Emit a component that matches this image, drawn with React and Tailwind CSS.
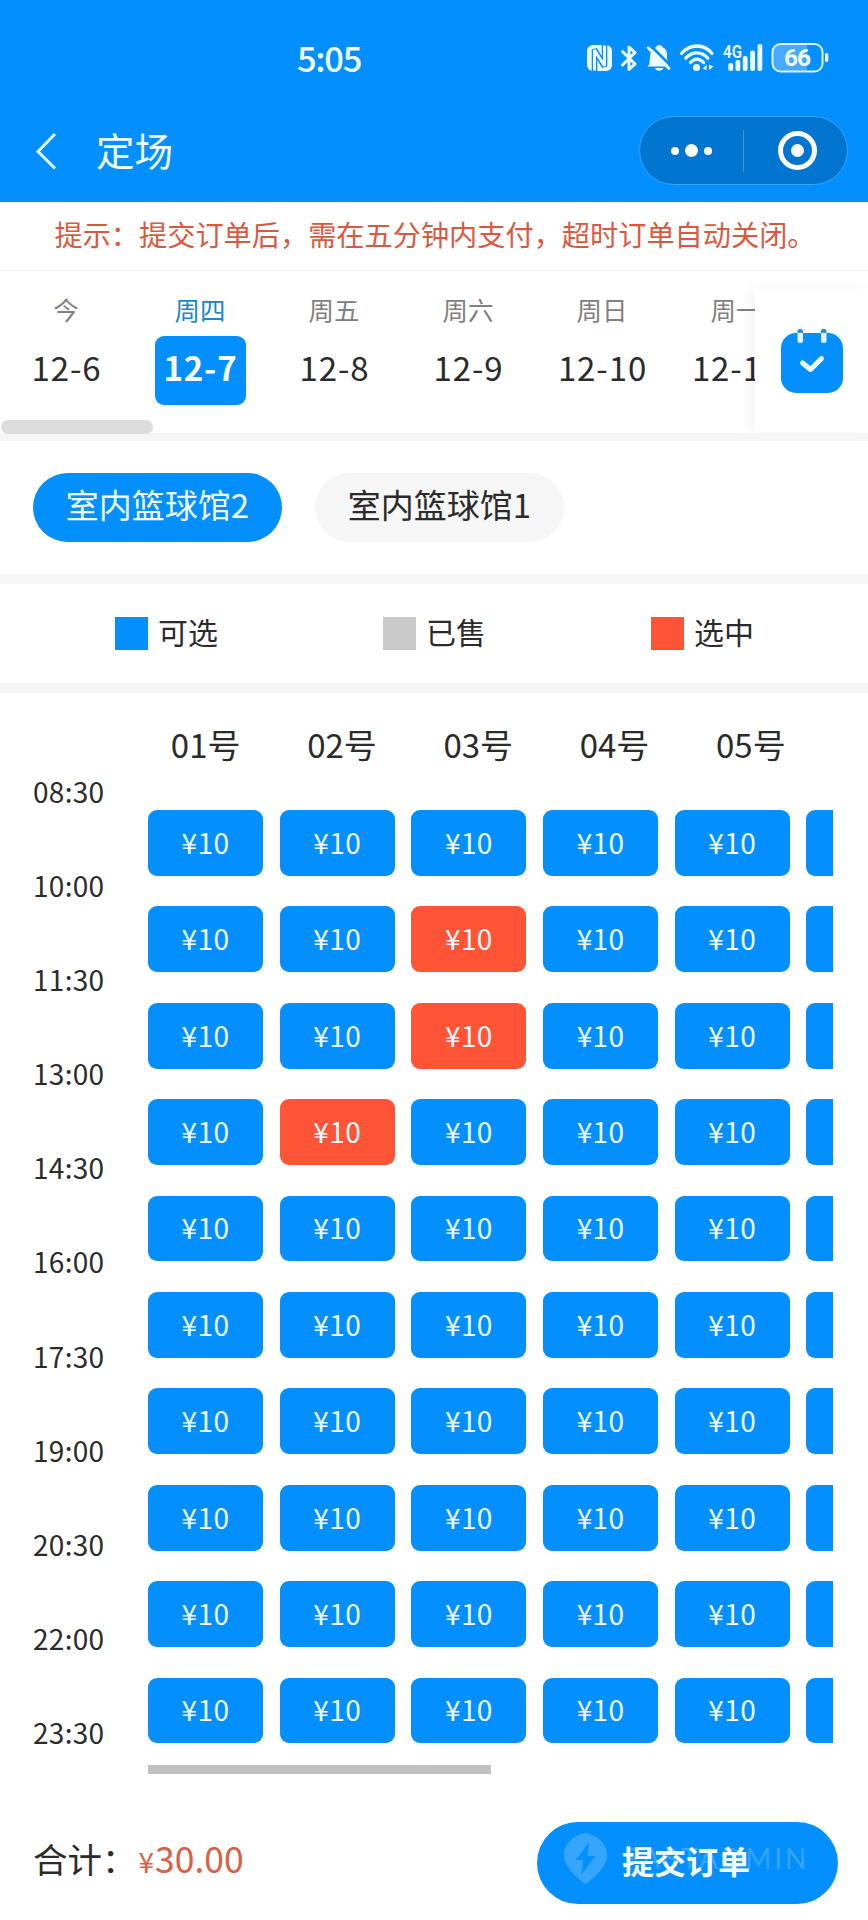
import React from "react";
import clsx from "clsx";

const days = [
  { week: "今", date: "12-6" },
  { week: "周四", date: "12-7", active: true },
  { week: "周五", date: "12-8" },
  { week: "周六", date: "12-9" },
  { week: "周日", date: "12-10" },
  { week: "周一", date: "12-11" },
];

const legend = [
  { name: "可选", color: "bg-[#048fff]" },
  { name: "已售", color: "bg-[#cacaca]" },
  { name: "选中", color: "bg-[#ff5436]" },
];

const courts = ["01号", "02号", "03号", "04号", "05号"];

const times = [
  "08:30",
  "10:00",
  "11:30",
  "13:00",
  "14:30",
  "16:00",
  "17:30",
  "19:00",
  "20:30",
  "22:00",
  "23:30",
];

// "row-column" of the picked slots
const selected = ["1-2", "2-2", "3-1"];

const StatusIcons = () => (
  <svg width="248" height="36" viewBox="0 0 248 36" fill="#eefcff">
    {/* NFC */}
    <rect x="3" y="5" width="25" height="26" rx="6" />
    <path
      d="M10.500 31V9.500L20.500 26.500V5"
      stroke="#048fff"
      strokeWidth="5.600"
      strokeLinejoin="bevel"
      fill="none"
    />
    <path
      d="M10.500 30.500V10L20.500 26V5.500"
      stroke="#eefcff"
      strokeWidth="3"
      strokeLinejoin="bevel"
      fill="none"
    />
    {/* Bluetooth */}
    <path
      d="M38.500 11.500L51 24L45 29.500V7L51 12.500L38.500 25"
      fill="none"
      stroke="#eefcff"
      strokeWidth="3"
      strokeLinecap="round"
      strokeLinejoin="round"
    />
    {/* Muted bell */}
    <path d="M65.500 24C66 13 67 8 72 7.200C73 4.300 77.500 4.300 78.500 7.200C83.500 9 83 14 83 18L84.500 26.500H63.500Z" />
    <path d="M71 28H79.500C78.500 31.500 72 31.500 71 28Z" />
    <path d="M66 5L88 27" stroke="#048fff" strokeWidth="2.600" />
    <path
      d="M64.200 7.800L85 28.500"
      stroke="#eefcff"
      strokeWidth="2.800"
      strokeLinecap="round"
    />
    {/* Wi-Fi */}
    <g fill="none" stroke="#eefcff" strokeWidth="3.300" strokeLinecap="round">
      <path d="M97.500 13.500C106 3.500 120 3.500 128 13.500" />
      <path d="M101.800 18.200C108 11 118 11 123.800 18.200" />
      <path d="M106.500 22.500C110.500 18 115.500 18 119.500 22.500" />
    </g>
    <circle cx="112.500" cy="27.500" r="3.500" />
    <path d="M122.700 24.500V30L118.500 28.800ZM125 24.500V30L129.500 26.500Z" />
    {/* Signal */}
    <text
      x="139"
      y="17.500"
      fontSize="17.500"
      fontWeight="600"
      textLength="19"
      lengthAdjust="spacingAndGlyphs"
      fontFamily="Roboto, sans-serif"
    >
      4G
    </text>
    <rect x="144.300" y="23" width="4.800" height="8" rx="2" />
    <rect x="151.500" y="20" width="4.800" height="11" rx="2" />
    <rect x="158.800" y="16" width="4.800" height="15" rx="2" />
    <rect x="166.200" y="10.500" width="4.800" height="20.500" rx="2" />
    <rect x="173.500" y="4" width="4.800" height="27" rx="2" />
    {/* Battery */}
    <path
      d="M197 4H223V31H197Q189 31 189 23V12Q189 4 197 4Z"
      fill="#48a9ff"
    />
    <rect
      x="188.500"
      y="4"
      width="50"
      height="27.500"
      rx="8"
      fill="none"
      stroke="#d8f2ff"
      strokeWidth="2"
    />
    <rect x="241" y="13" width="3.300" height="9" rx="1.500" />
    <text
      x="213.500"
      y="26.300"
      fontSize="24.500"
      fontWeight="700"
      textAnchor="middle"
      textLength="27"
      fontFamily="Roboto, sans-serif"
    >
      66
    </text>
  </svg>
);

const Header = () => (
  <header className="h-[202px] bg-[#048fff] text-[#f0fdff]">
    <div className="flex h-[100px] items-center justify-between pt-[16px] pr-[36px] pl-[297px]">
      <span className="pb-[2px] text-[34.500px] leading-none font-medium tracking-[-1.300px]">
        5:05
      </span>
      <StatusIcons />
    </div>
    <div className="mt-[16px] flex h-[69px] items-center pr-[20px] pl-[35px]">
      <svg width="22" height="40" viewBox="0 0 22 40" fill="none">
        <path d="M20 3L3 20.500L20 37.500" stroke="#e4f6ff" strokeWidth="3" />
      </svg>
      <h1 className="ml-[39px] pb-[2px] text-[38.500px] leading-none font-normal">定场</h1>
      <div className="ml-auto flex h-[69px] w-[209px] items-center rounded-full border border-[#3ba2f5] bg-[#0275d0]">
        <div className="flex w-[102px] items-center justify-center gap-[6px]">
          <i className="size-[8px] rounded-full bg-white" />
          <i className="size-[13px] rounded-full bg-white" />
          <i className="size-[8px] rounded-full bg-white" />
        </div>
        <div className="ml-px h-[42px] w-px bg-[#3f97de]" />
        <div className="flex flex-1 items-center justify-center pl-[3px]">
          <div className="flex size-[39px] items-center justify-center rounded-full border-[5.500px] border-white">
            <i className="size-[13px] rounded-full bg-white" />
          </div>
        </div>
      </div>
    </div>
  </header>
);

const DateBar = () => (
  <div className="relative flex h-[162px] justify-between overflow-hidden">
    <div className="-ml-[1px] flex">
      {days.map((day) => (
        <div key={day.date} className="flex w-[134px] shrink-0 flex-col items-center">
          <span
            className={clsx(
              "mt-[21px] text-[25.500px] leading-[34px]",
              day.active ? "text-[#1b86cb]" : "text-[#808080]"
            )}
          >
            {day.week}
          </span>
          <span
            className={clsx(
              "mt-[10px] flex h-[69px] items-center justify-center rounded-[9px] pb-[5px] pl-px text-[33px] tracking-[0.900px]",
              day.active ? "w-[91px] bg-[#048fff] font-bold text-white" : "text-[#2b2b2b]"
            )}
          >
            {day.date}
          </span>
        </div>
      ))}
    </div>

    {/* Calendar button over the scrolling days */}
    <div className="absolute top-[18px] right-0 flex h-[143px] w-[113px] justify-center bg-white pt-[38px] shadow-[-4px_0_14px_rgba(0,0,0,0.05)]">
      <svg width="64" height="66" viewBox="0 0 64 66">
        <rect x="1" y="6" width="62" height="60" rx="15" fill="#048fff" />
        <rect x="17.500" y="2" width="5.500" height="14" rx="2.500" fill="#e4f7ff" />
        <rect x="41" y="2" width="5.500" height="14" rx="2.500" fill="#e4f7ff" />
        <path
          d="M17.500 6V4.500a2.750 2.750 0 0 1 5.500 0V6ZM41 6V4.500a2.750 2.750 0 0 1 5.500 0V6Z"
          fill="#2f8fd8"
        />
        <path
          d="M22.500 36L30.500 42.500L41.500 31.500"
          fill="none"
          stroke="#f0fbff"
          strokeWidth="5"
          strokeLinecap="round"
          strokeLinejoin="round"
        />
      </svg>
    </div>
  </div>
);

const BookingGrid = () => (
  <div className="flex h-[1082px]">
    <div className="mt-[81px] w-[148px] pl-[33px]">
      {times.map((time) => (
        <div
          key={time}
          className="h-[94.100px] text-[28px] leading-[34px] tracking-[0.300px] text-[#2b2b2b]"
        >
          {time}
        </div>
      ))}
    </div>
    <div className="w-[685px] overflow-hidden">
      <div className="mt-[27px] -ml-[10.500px] flex h-[48px] text-[33px] leading-[48px] text-[#2b2b2b]">
        {courts.map((court) => (
          <div key={court} className="w-[136.300px] shrink-0 text-center">
            {court}
          </div>
        ))}
      </div>
      <div className="mt-[42px] flex flex-col gap-[30.600px]">
        {times.slice(1).map((time, row) => (
          <div key={time} className="flex gap-[16.700px]">
            {[0, 1, 2, 3, 4, 5].map((col) => (
              <button
                key={col}
                className={clsx(
                  "h-[65.800px] w-[115px] shrink-0 rounded-[9px] pb-[2px] text-[28px] leading-none tracking-[0.400px] text-[#f0fcff]",
                  selected.includes(`${row}-${col}`) ? "bg-[#ff5436]" : "bg-[#048fff]"
                )}
              >
                {col < 5 && "¥10"}
              </button>
            ))}
          </div>
        ))}
      </div>
      <div className="mt-[22px] h-[9px] w-[343px] bg-[#c1c1c1]" />
    </div>
  </div>
);

const Footer = () => (
  <footer className="mt-[47px] flex h-[82px] items-center justify-between pr-[30px] pl-[33px]">
    <div className="flex items-baseline pb-[10px] leading-none">
      <span className="text-[34.500px] text-[#2b2b2b]">合计：</span>
      <span className="ml-[2px] text-[28px] text-[#dc5f45]">¥</span>
      <span className="ml-[1px] text-[35.500px] text-[#dc5f45]">30.00</span>
    </div>
    <button className="relative flex h-[82px] w-[301px] items-center justify-center rounded-full bg-[#048fff]">
      <span className="absolute top-[11px] left-[27px] flex items-center text-white/20">
        <svg width="43" height="51" viewBox="0 0 43 51" fill="currentColor">
          <path
            fillRule="evenodd"
            d="M21.500 0C31 1.500 43 9 43 22C43 34 31 44 21.500 51C12 44 0 34 0 22C0 9 12 1.500 21.500 0ZM25 9.500L11.500 27H19L17.500 41.500L31.500 23H23.500Z"
          />
        </svg>
        <span className="ml-[17px] pb-[1px] font-[Lato] text-[28px] leading-none tracking-[3px]">
          FASTADMIN
        </span>
      </span>
      <span className="relative pr-[3px] pb-[7px] text-[32px] leading-none font-bold text-[#f4ffff]">
        提交订单
      </span>
    </button>
  </footer>
);

export default function App() {
  return (
    <div
      lang="zh-CN"
      className="h-[1920px] w-[868px] overflow-hidden bg-white font-['Noto_Sans_CJK_SC',sans-serif]"
    >
      <Header />
      <p className="flex h-[69px] items-center justify-center border-b border-[#f2f2f2] pb-[4px] pl-[2px] text-[28.200px] text-[#d9593f]">
        提示：提交订单后，需在五分钟内支付，超时订单自动关闭。
      </p>
      <DateBar />
      <div className="h-[8px] bg-[#f6f6f8]">
        {/* scroll thumb of the date bar */}
        <div className="relative -top-[13px] left-px h-[14px] w-[152px] rounded-full bg-[#dcddde]" />
      </div>

      <div className="flex h-[133px] gap-[33px] pt-[32px] pl-[33px] text-[33px] leading-[63px]">
        <div className="h-[69px] w-[249px] rounded-full bg-[#048fff] text-center text-[#f0fcff]">
          室内篮球馆2
        </div>
        <div className="h-[69px] w-[249px] rounded-full bg-[#f6f6f6] text-center text-[#2b2b2b]">
          室内篮球馆1
        </div>
      </div>

      <div className="flex h-[119px] items-center border-y-[10px] border-[#f6f6f6] pl-[115px] text-[30px] text-[#2b2b2b]">
        {legend.map((item) => (
          <div key={item.name} className="flex w-[268px] shrink-0 items-center gap-[10px]">
            <i className={clsx("size-[33px]", item.color)} />
            <span className="pb-[5px] leading-none">{item.name}</span>
          </div>
        ))}
      </div>

      <BookingGrid />
      <Footer />
    </div>
  );
}
